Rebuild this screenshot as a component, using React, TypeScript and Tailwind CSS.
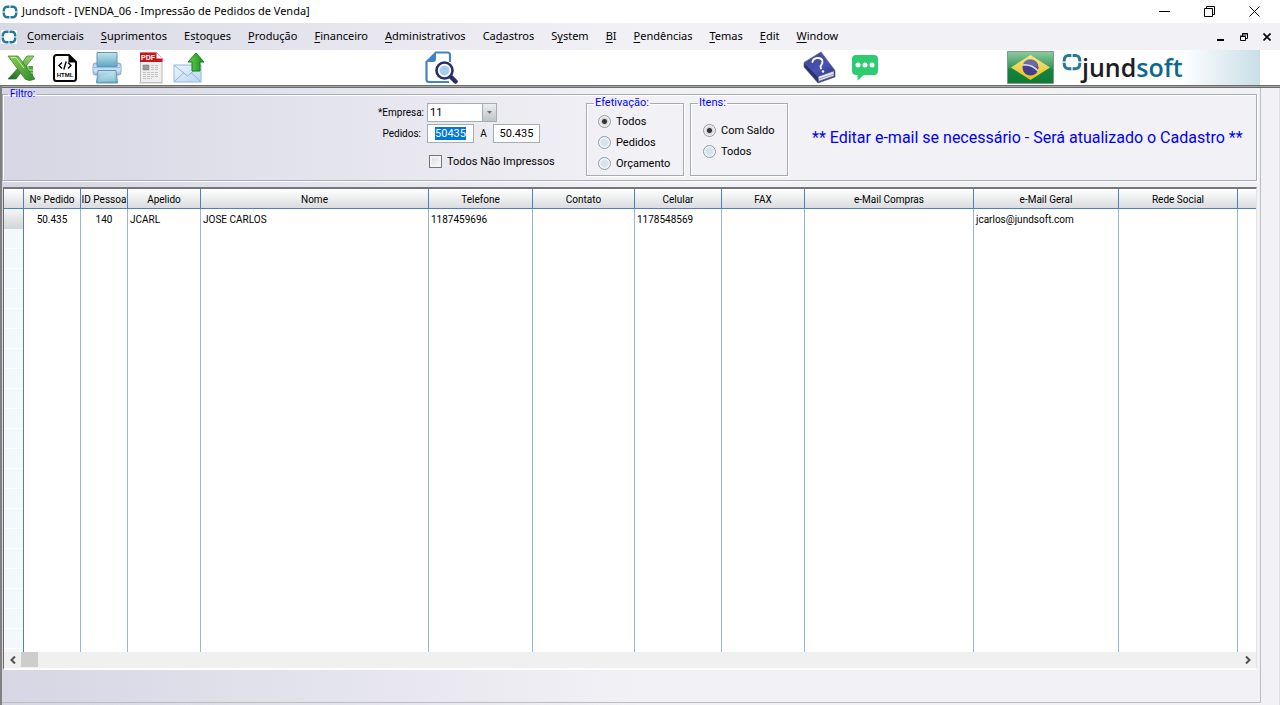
import { useEffect, useRef } from "react";
import type { ReactNode } from "react";

const menus: [string, string, string][] = [
  ["", "C", "omerciais"],
  ["", "S", "uprimentos"],
  ["Es", "t", "oques"],
  ["", "P", "rodução"],
  ["", "F", "inanceiro"],
  ["", "A", "dministrativos"],
  ["Ca", "d", "astros"],
  ["S", "y", "stem"],
  ["", "B", "I"],
  ["", "P", "endências"],
  ["", "T", "emas"],
  ["", "E", "dit"],
  ["", "W", "indow"],
];

const columns: { label: string; width: string; value: string; center?: boolean }[] = [
  { label: "Nº Pedido", width: "w-[57px]", value: "50.435", center: true },
  { label: "ID Pessoa", width: "w-[47px]", value: "140", center: true },
  { label: "Apelido", width: "w-[73px]", value: "JCARL" },
  { label: "Nome", width: "w-[228px]", value: "JOSE CARLOS" },
  { label: "Telefone", width: "w-[104px]", value: "1187459696" },
  { label: "Contato", width: "w-[102px]", value: "" },
  { label: "Celular", width: "w-[87px]", value: "1178548569" },
  { label: "FAX", width: "w-[83px]", value: "" },
  { label: "e-Mail Compras", width: "w-[169px]", value: "" },
  { label: "e-Mail Geral", width: "w-[145px]", value: "jcarlos@jundsoft.com" },
  { label: "Rede Social", width: "w-[119px]", value: "" },
];

function Ring({ className }: { className: string }) {
  return (
    <svg viewBox="0 0 16 14" className={className} fill="none" stroke="#23799b" strokeWidth="2.4">
      <path d="M7.500 1.700H5Q1.700 2 1.700 6.500M1.700 7.500Q1.700 12 5 12.300H7.500M8.500 12.300H11Q14.300 12 14.300 7.500M14.300 6.500Q14.300 2 11 1.700H8.500" />
    </svg>
  );
}

function ExcelIcon() {
  return (
    <svg viewBox="0 0 30 28" className="h-7 w-[30px]">
      <defs>
        <linearGradient id="xa" x1="0" y1="0" x2="1" y2="1">
          <stop offset="0" stopColor="#8fd052" />
          <stop offset="1" stopColor="#2c8a2b" />
        </linearGradient>
        <linearGradient id="xb" x1="1" y1="0" x2="0" y2="1">
          <stop offset="0" stopColor="#a9e06a" />
          <stop offset="1" stopColor="#17631f" />
        </linearGradient>
      </defs>
      <path d="M16 12h10v10H17z" fill="#4fa33c" />
      <path d="M17 16h9M17 19h9M21 12v10" stroke="#bfe3a5" />
      <path d="M20 2h7L9 25H1L12 13z" fill="url(#xb)" stroke="#257a2a" strokeWidth=".7" />
      <path d="M1 2h10l17 23q-6 3-10 0z" fill="url(#xa)" stroke="#2d7d2a" strokeWidth=".7" />
      <path d="M4 3.500h5L17 14" stroke="#d0f0a8" fill="none" />
    </svg>
  );
}

function HtmlIcon() {
  return (
    <svg viewBox="0 0 24 28" className="h-7 w-6" fill="none" stroke="#050505" strokeWidth="2">
      <path d="M3.500 1H16l7 7v16.500a2.500 2.500 0 0 1-2.500 2.500h-17A2.500 2.500 0 0 1 1 24.500v-21A2.500 2.500 0 0 1 3.500 1z" />
      <path d="M16 1v7h7z" fill="#050505" strokeWidth="1" />
      <path d="M9 8.500 6 11.500l3 3M15 8.500l3 3-3 3M13.200 7.500l-2.400 8" strokeWidth="1.400" />
      <text x="12" y="23" textAnchor="middle" stroke="none" fill="#050505" className="font-['Liberation_Sans'] text-[6px] font-bold">HTML</text>
    </svg>
  );
}

function PrinterIcon() {
  return (
    <svg viewBox="0 0 30 32" className="h-8 w-[30px]">
      <defs>
        <linearGradient id="pa" x1="0" y1="0" x2="0" y2="1">
          <stop offset="0" stopColor="#c3e3ee" />
          <stop offset="1" stopColor="#5ea9c4" />
        </linearGradient>
        <linearGradient id="pb" x1="0" y1="0" x2="0" y2="1">
          <stop offset="0" stopColor="#a5bfe0" />
          <stop offset=".5" stopColor="#e8f4ff" />
          <stop offset="1" stopColor="#8fb0d6" />
        </linearGradient>
      </defs>
      <rect x="1" y="11" width="28" height="12" rx="2.500" fill="url(#pb)" stroke="#86a6cd" />
      <path d="M5 .5h20v14H5z" fill="url(#pa)" stroke="#6796ab" />
      <path d="M2 15h26v3H2z" fill="#8fbdf3" />
      <path d="M2 17h26" stroke="#f3faff" />
      <path d="M6 18.500h18l1.500 12.500h-21z" fill="url(#pa)" stroke="#6796ab" />
      <path d="m7 25 15-5 1 9-17 1z" fill="#d4edf5" opacity=".35" />
    </svg>
  );
}

function PdfIcon() {
  return (
    <svg viewBox="0 0 26 32" className="h-8 w-[26px]">
      <path d="M2.500 1H18l6 6v23.500H2.500z" fill="#efefef" stroke="#b9b9b9" />
      <path d="M2 .5h16.500L24.500 7v3H2z" fill="#c5171c" />
      <path d="M18.500.5v6h6z" fill="#fff" stroke="#c98a8a" strokeWidth=".6" />
      <text x="3" y="8" fill="#fff" className="font-['Liberation_Sans'] text-[7px] font-bold">PDF</text>
      <path d="M5 13h6v5H5z" fill="#9a9a9a" stroke="#777" strokeWidth=".5" />
      <path d="M13 13.500h8M13 15.500h8M13 17.500h8M5 20.500h16M5 22.500h16M5 24.500h16M5 26.500h9" stroke="#c2c2c2" strokeDasharray="3 1" />
      <path d="M1 31h24" stroke="#c9c9c9" />
    </svg>
  );
}

function MailIcon() {
  return (
    <svg viewBox="0 0 32 32" className="h-8 w-8">
      <defs>
        <linearGradient id="ma" x1="0" y1="0" x2="1" y2="1">
          <stop offset="0" stopColor="#eef6fd" />
          <stop offset="1" stopColor="#b9d6f1" />
        </linearGradient>
        <linearGradient id="mb" x1="0" y1="0" x2="1" y2="0">
          <stop offset="0" stopColor="#6bd04f" />
          <stop offset="1" stopColor="#17901c" />
        </linearGradient>
      </defs>
      <rect x="1" y="13" width="27" height="17" fill="url(#ma)" stroke="#94b8dc" />
      <path d="m1.500 13.500 13 10.500 13-10.500M1.500 29.500l9.500-9M27.500 29.500l-9.500-9" fill="none" stroke="#8eb2d8" />
      <path d="M23 1 31 10h-4v9h-8V10h-4z" fill="url(#mb)" stroke="#157c1a" />
    </svg>
  );
}

function PreviewIcon() {
  return (
    <svg viewBox="0 0 33 33" className="h-[33px] w-[33px]" fill="none">
      <path d="M11 1.500h11.500q2.500 0 2.500 2.500v7M1.500 11v17.500q0 2.500 2.500 2.500h20" stroke="#4183c4" strokeWidth="2.200" />
      <path d="M0 11 11 0v8q0 3-3 3z" fill="#4183c4" />
      <path d="m25.500 25.500 5 5" stroke="#272e6b" strokeWidth="4.500" strokeLinecap="round" />
      <circle cx="19.500" cy="19.500" r="8" fill="#fff" stroke="#272e6b" strokeWidth="2.600" />
      <circle cx="19.500" cy="19.500" r="5" fill="#a7cdec" />
    </svg>
  );
}

function BookIcon() {
  return (
    <svg viewBox="0 0 33 33" className="h-[33px] w-[33px]">
      <defs>
        <linearGradient id="ba" x1="0" y1="0" x2="1" y2="1">
          <stop offset="0" stopColor="#3c4494" />
          <stop offset=".6" stopColor="#4a52b4" />
          <stop offset="1" stopColor="#2c347f" />
        </linearGradient>
      </defs>
      <path d="M1 12v4l14 16 17-6v-6z" fill="#293177" stroke="#555a86" strokeWidth=".6" />
      <path d="m15 25 16-5.500v5.500l-15.500 5.500z" fill="#e3e4ec" stroke="#555a86" strokeWidth=".7" />
      <path d="m16 28 15-5" stroke="#a4a7bd" />
      <path d="M1 11.500 18 1l14 18.500-17 6z" fill="url(#ba)" stroke="#5a5f91" strokeWidth=".7" />
      <path d="M9.500 11q0-3 4.500-4 5-.3 5.500 3.300.2 2.500-1.500 4-1 1.200 0 3.200" fill="none" stroke="#fff" strokeWidth="1.800" strokeLinecap="round" />
      <circle cx="20" cy="20.500" r="1.200" fill="#fff" />
    </svg>
  );
}

function ChatIcon() {
  return (
    <svg viewBox="0 0 26 26" className="h-[26px] w-[26px]">
      <path d="M4 0h18q4 0 4 4v12q0 4-4 4H12l-6.500 5.500V20H4q-4 0-4-4V4q0-4 4-4z" fill="#2ecc71" />
      <g fill="#fff">
        <circle cx="6" cy="10" r="2.500" />
        <circle cx="13" cy="10" r="2.500" />
        <circle cx="20" cy="10" r="2.500" />
      </g>
    </svg>
  );
}

function FlagIcon() {
  return (
    <svg viewBox="0 0 47 33" className="h-[33px] w-[47px]">
      <defs>
        <linearGradient id="fa" x1="0" y1="0" x2="0" y2="1">
          <stop offset="0" stopColor="#8fcba0" />
          <stop offset=".5" stopColor="#37975a" />
          <stop offset=".55" stopColor="#148440" />
          <stop offset="1" stopColor="#0e7c35" />
        </linearGradient>
        <linearGradient id="fb" x1="0" y1="0" x2="0" y2="1">
          <stop offset="0" stopColor="#f5e98b" />
          <stop offset="1" stopColor="#e8bd16" />
        </linearGradient>
      </defs>
      <path d="M.5.5h46v32H.5z" fill="url(#fa)" stroke="#7d9c87" />
      <path d="M4 16.500 23.500 4 43 16.500 23.500 29z" fill="url(#fb)" />
      <circle cx="23.500" cy="16.500" r="8" fill="#433f8c" />
      <path d="M17 10.500q7-5 12 .5 2 3 2 6-7-4.500-15-3.500z" fill="#8b87b8" opacity=".6" />
      <path d="M16 14q9-1 15 6" fill="none" stroke="#d8d8ea" strokeWidth="1.600" />
    </svg>
  );
}

function ToolButton({ label, className, children }: { label: string; className: string; children: ReactNode }) {
  return (
    <button type="button" aria-label={label} className={`flex shrink-0 ${className}`}>
      {children}
    </button>
  );
}

function Radio({ name, label, checked }: { name: string; label: string; checked?: boolean }) {
  return (
    <label className="flex h-[21px] items-center gap-[5px] whitespace-nowrap">
      <input
        type="radio"
        name={name}
        defaultChecked={checked}
        className="size-[13px] appearance-none rounded-full border border-[#8a9aa5] bg-[radial-gradient(circle,#d5e3ee_0_3px,#f4f7fa_5px)] checked:bg-[radial-gradient(circle,#26344c_0_2px,#e2cdbd_3px,#f4f0ee_5px)]"
      />
      <span className="pt-0.5">{label}</span>
    </label>
  );
}

const fieldset = "min-w-0 border border-[#a3adb3] shadow-[1px_1px_0_#fff,inset_1px_1px_0_#fff]";
const field = "h-[19px] border border-[#a3adb3] bg-white text-[11px] leading-4 outline-none";

export default function App() {
  const from = useRef<HTMLInputElement>(null);
  useEffect(() => {
    from.current?.focus();
    from.current?.select();
  }, []);

  return (
    <div className="flex h-screen flex-col overflow-hidden bg-white font-[Roboto,'Liberation_Sans',sans-serif] text-[10px] text-black">
      <header className="flex h-[23px] shrink-0 items-center pl-0.5 font-['Noto_Sans',sans-serif] text-[11px]">
        <Ring className="h-3.5 w-4" />
        <h1 className="ml-1 whitespace-nowrap">Jundsoft - [VENDA_06 - Impressão de Pedidos de Venda]</h1>
        <div className="mr-5 ml-auto flex items-center gap-[34px]">
          <button type="button" aria-label="Minimizar">
            <svg viewBox="0 0 11 11" className="size-[11px]" stroke="#000"><path d="M0 5.500h11" /></svg>
          </button>
          <button type="button" aria-label="Restaurar">
            <svg viewBox="0 0 11 11" className="size-[11px]" fill="none" stroke="#000"><path d="M.5 2.500h8v8h-8zM2.500 2.500v-2h8v8h-2" /></svg>
          </button>
          <button type="button" aria-label="Fechar">
            <svg viewBox="0 0 11 11" className="size-[11px]" stroke="#000"><path d="m.5.5 10 10M10.500.5l-10 10" /></svg>
          </button>
        </div>
      </header>

      <nav className="flex h-[27px] shrink-0 items-center bg-linear-to-r from-[#d9d9e6] to-[#f2f1f6] to-50% pl-px font-['Noto_Sans',sans-serif] text-[11px]">
        <div className="bg-white"><Ring className="h-3.5 w-4" /></div>
        <div className="ml-2.5 flex gap-[17px]">
          {menus.map(([a, key, b]) => (
            <button type="button" key={a + key + b} className="whitespace-nowrap">
              {a}<span className="underline underline-offset-2">{key}</span>{b}
            </button>
          ))}
        </div>
        <div className="mr-[9px] ml-auto flex items-center gap-[15px]">
          <button type="button" aria-label="Minimizar janela">
            <svg viewBox="0 0 8 8" className="size-2" stroke="#000" strokeWidth="2"><path d="M0 7h7" /></svg>
          </button>
          <button type="button" aria-label="Restaurar janela">
            <svg viewBox="0 0 8 8" className="size-2" fill="none" stroke="#000"><path d="M.5 3.500h5v4h-5zM2.500 3V.5h5v5H6M0 3h6M2 1h6" /></svg>
          </button>
          <button type="button" aria-label="Fechar janela">
            <svg viewBox="0 0 8 8" className="size-2" stroke="#000" strokeWidth="1.600"><path d="m.5.5 7 7M7.500.5l-7 7" /></svg>
          </button>
        </div>
      </nav>

      <div className="flex h-[35px] shrink-0 items-center pl-[7px]">
        <ToolButton label="Excel" className="mr-4"><ExcelIcon /></ToolButton>
        <ToolButton label="HTML" className="mr-[15px]"><HtmlIcon /></ToolButton>
        <ToolButton label="Imprimir" className="mr-4"><PrinterIcon /></ToolButton>
        <ToolButton label="PDF" className="mr-[9px]"><PdfIcon /></ToolButton>
        <ToolButton label="Enviar e-mail" className="mr-[220px]"><MailIcon /></ToolButton>
        <ToolButton label="Visualizar" className="mr-[345px]"><PreviewIcon /></ToolButton>
        <ToolButton label="Ajuda" className="mr-4"><BookIcon /></ToolButton>
        <ToolButton label="Chat" className=""><ChatIcon /></ToolButton>
        <div className="mr-5 ml-auto flex h-full items-center">
          <FlagIcon />
          <div className="ml-2 flex h-full w-[198px] items-start bg-linear-to-r from-white from-60% to-[#c9dfe8]">
            <Ring className="mt-[3px] h-[18px] w-5" />
            <span className="mt-px font-['Open_Sans',sans-serif] text-[25px] leading-8 font-semibold text-[#1d1d1f]">jund<span className="text-[#0c6890]">soft</span></span>
          </div>
        </div>
      </div>

      <main className="flex min-h-0 flex-1 border-t border-l-2 border-t-[#6b6e6b] border-l-[#808080] bg-linear-to-r from-[#d6d6e4] to-[#f2f1f6] to-50% pt-0.5 pr-[19px] shadow-[inset_0_1px_0_#a3a5a3,inset_0_2px_0_#6b6e6b,inset_-1px_0_0_#e0e0e0]">
        <div className="mb-0.5 flex min-w-0 flex-1 flex-col border-r border-b border-[#bdbdbd] pr-[3px]">
          <fieldset className={`h-[93px] shrink-0 pl-[375px] ${fieldset}`}>
            <legend className="ml-[-370px] h-3 px-0.5 text-[10px] leading-3 text-[#00f]">Filtro:</legend>
            <div className="flex items-start">
              <div className="mt-[3px] w-[201px] shrink-0">
                <div className="flex items-center">
                  <label htmlFor="empresa" className="w-[47px] pr-px text-right">*Empresa:</label>
                  <div className="relative ml-0.5">
                    <select id="empresa" className={`${field} w-[70px] appearance-none pl-0.5`} defaultValue="11">
                      <option>11</option>
                    </select>
                    <span className="pointer-events-none absolute top-px right-px flex h-[17px] w-3.5 items-center justify-center border-l border-[#a3adb3] bg-linear-to-b from-[#eceeef] to-[#bfc4c8]">
                      <svg viewBox="0 0 5 3" className="h-[3px] w-[5px]"><path d="M0 0h5L2.500 3z" fill="#6d7478" /></svg>
                    </span>
                  </div>
                </div>
                <div className="mt-0.5 flex items-center">
                  <label htmlFor="de" className="w-[47px] pr-1 text-right">Pedidos:</label>
                  <input id="de" ref={from} defaultValue="50435" className={`${field} ml-0.5 w-[47px] text-center selection:bg-[#0078d7] selection:text-white`} />
                  <label htmlFor="ate" className="w-[19px] text-center">A</label>
                  <input id="ate" defaultValue="50.435" className={`${field} w-[47px] text-center`} />
                </div>
                <label className="mt-2.5 ml-[51px] flex items-center gap-[5px] text-[11px] leading-4 whitespace-nowrap">
                  <input type="checkbox" className="size-[13px] appearance-none border border-[#6f777c] bg-linear-to-br from-[#d3d6da] to-white shadow-[inset_0_0_0_2px_#f4f4f4]" />
                  <span className="pt-px">Todos Não Impressos</span>
                </label>
              </div>
              <fieldset className={`-mt-[3px] ml-[7px] h-[79px] w-[98px] shrink-0 pl-[11px] text-[11px] ${fieldset}`}>
                <legend className="-ml-1 h-3 px-px text-[11px] leading-3 text-[#00f]">Efetivação:</legend>
                <div className="pt-0.5">
                  <Radio name="efetivacao" label="Todos" checked />
                  <Radio name="efetivacao" label="Pedidos" />
                  <Radio name="efetivacao" label="Orçamento" />
                </div>
              </fieldset>
              <fieldset className={`-mt-[3px] ml-1.5 h-[79px] w-[98px] shrink-0 pl-3 text-[11px] ${fieldset}`}>
                <legend className="-ml-[5px] h-3 px-px text-[11px] leading-3 text-[#00f]">Itens:</legend>
                <div className="pt-[11px]">
                  <Radio name="itens" label="Com Saldo" checked />
                  <Radio name="itens" label="Todos" />
                </div>
              </fieldset>
              <p className="mt-[26px] ml-6 text-[16px] leading-6 whitespace-nowrap text-[#00f]">
                ** Editar e-mail se necessário - Será atualizado o Cadastro **
              </p>
            </div>
          </fieldset>

          <section className="mt-1.5 mb-8 ml-px flex min-h-0 flex-1 flex-col overflow-hidden border-t-2 border-r border-b-2 border-l border-t-[#77777b] border-r-[#e3e3e3] border-b-white border-l-[#6b6b6b] bg-white">
            <div className="min-h-0 flex-1">
              <table className="h-full w-full table-fixed border-separate border-spacing-0 leading-4">
                <thead>
                  <tr className="h-5 bg-linear-to-b from-white to-[#d8dadd]">
                    <th className="w-5 border-r border-b border-[#4c7fc4]" />
                    {columns.map((c) => (
                      <th key={c.label} className={`${c.width} border-r border-b border-[#4c7fc4] p-0 pt-0.5 text-center font-normal whitespace-nowrap`}>
                        {c.label}
                      </th>
                    ))}
                    <th className="border-b border-[#4c7fc4]" />
                  </tr>
                </thead>
                <tbody>
                  <tr className="h-5">
                    <th className="border-r border-[#4c7fc4] bg-linear-to-b from-[#f6f6f7] to-[#d2d4d7]" />
                    {columns.map((c) => (
                      <td key={c.label} className={`border-r border-[#9ab5dd] px-0.5 pt-0.5 pb-0 whitespace-nowrap ${c.center ? "text-center" : ""}`}>
                        {c.value}
                      </td>
                    ))}
                    <td />
                  </tr>
                  <tr>
                    <th className="border-r border-[#4c7fc4] bg-[repeating-linear-gradient(#f4f8fd_0_19px,#fff_19px_20px)]" />
                    {columns.map((c) => (
                      <td key={c.label} className="border-r border-[#9ab5dd]" />
                    ))}
                    <td />
                  </tr>
                </tbody>
              </table>
            </div>
            <div className="flex h-4 shrink-0 items-center bg-[#f0f0f0]">
              <button type="button" aria-label="Rolar para a esquerda" className="flex w-[17px] justify-center">
                <svg viewBox="0 0 6 8" className="h-2 w-1.5" fill="none" stroke="#505050" strokeWidth="2"><path d="M5 .5 1.500 4 5 7.500" /></svg>
              </button>
              <div className="h-[15px] w-[17px] self-start bg-[#cdcdcd]" />
              <button type="button" aria-label="Rolar para a direita" className="ml-auto flex w-[17px] justify-center">
                <svg viewBox="0 0 6 8" className="h-2 w-1.5" fill="none" stroke="#505050" strokeWidth="2"><path d="M1 .5 4.500 4 1 7.500" /></svg>
              </button>
            </div>
          </section>
        </div>
      </main>
    </div>
  );
}
